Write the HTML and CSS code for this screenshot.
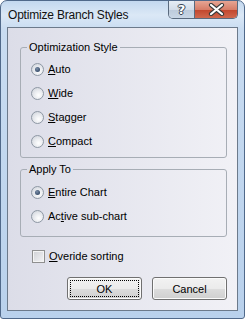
FILE: index.html
```html
<!DOCTYPE html>
<html>
<head>
	<title>Optimize Branch Styles</title>
	<link rel="stylesheet" href="styles.css">
</head>
<body>
	<div class="window">
		<div class="titlebar">
			<span class="title">Optimize Branch Styles</span>
			<div class="caption">
				<span class="cap-btn help">?</span>
				<span class="cap-btn close">
					<svg width="17" height="13" viewBox="0 0 17 13">
						<path d="M3 2 L14 11 M14 2 L3 11" stroke="#3b3b3b" stroke-width="4.2" stroke-linecap="round"/>
						<path d="M3 2 L14 11 M14 2 L3 11" stroke="#ffffff" stroke-width="2.2" stroke-linecap="round"/>
					</svg>
				</span>
			</div>
		</div>
		<div class="client">
			<fieldset class="group group-style">
				<legend>Optimization Style</legend>
				<label class="option"><span class="radio checked"></span><span><u>A</u>uto</span></label>
				<label class="option"><span class="radio"></span><span><u>W</u>ide</span></label>
				<label class="option"><span class="radio"></span><span><u>S</u>tagger</span></label>
				<label class="option"><span class="radio"></span><span><u>C</u>ompact</span></label>
			</fieldset>
			<fieldset class="group group-apply">
				<legend>Apply To</legend>
				<label class="option"><span class="radio checked"></span><span><u>E</u>ntire Chart</span></label>
				<label class="option"><span class="radio"></span><span>Ac<u>t</u>ive sub-chart</span></label>
			</fieldset>
			<label class="option sorting"><span class="checkbox"></span><span><u>O</u>veride sorting</span></label>
			<div class="buttons">
				<button class="btn default"><span class="focus">OK</span></button>
				<button class="btn">Cancel</button>
			</div>
		</div>
	</div>
</body>
</html>
```

FILE: styles.css
```css
		body {
			margin: 0;
			font-family: "Liberation Sans", Arial, sans-serif;
			font-size: 11px;
			color: #000;
			background: #fff;
		}
		.window {
			width: 245px;
			height: 319px;
			box-sizing: border-box;
			border: 1px solid #50698a;
			border-radius: 7px 7px 3px 3px;
			background: linear-gradient(to bottom, #c3d8ef 0px, #dbe8f6 14px, #c9dcf1 28px, #b9d1ec 100%);
			display: flex;
			flex-direction: column;
			overflow: hidden;
		}
		.titlebar {
			height: 26px;
			display: flex;
			justify-content: space-between;
			align-items: flex-start;
			padding-left: 7px;
		}
		.title {
			font-size: 12px;
			margin-top: 7px;
			letter-spacing: -0.2px;
			color: #111;
		}
		.caption {
			display: flex;
			margin-right: 6px;
			border: 1px solid #5a6a7e;
			border-top: none;
			border-radius: 0 0 5px 5px;
			overflow: hidden;
			height: 17px;
		}
		.cap-btn {
			display: flex;
			align-items: center;
			justify-content: center;
		}
		.help {
			width: 25px;
			border-right: 1px solid #5a6a7e;
			background: linear-gradient(to bottom, #e6edf5 0%, #d3dde9 50%, #bccadb 51%, #c9d7e6 100%);
			color: #fff;
			font-family: "DejaVu Sans", sans-serif;
			font-weight: bold;
			font-size: 13px;
			text-shadow: 0 0 1px #3b4656, 1px 0 0 #3b4656, -1px 0 0 #3b4656, 0 1px 0 #3b4656, 0 -1px 0 #3b4656;
		}
		.close {
			width: 42px;
			background: linear-gradient(to bottom, #e6a594 0%, #d77d68 50%, #c2452c 51%, #d0684e 100%);
		}
		.client {
			flex: 1;
			margin: 0 6px 7px 6px;
			border: 1px solid #6c7a8b;
			background: linear-gradient(to right, #dcdde8, #f1f1f6);
			display: flex;
			flex-direction: column;
			padding: 0 10px 0 12px;
		}
		.group {
			margin: 13px 0 0 0;
			padding: 3px 0 4px 10px;
			border: 1px solid #a7adb5;
			border-radius: 3px;
		}
		.group legend {
			padding: 0 2px;
			margin-left: -4px;
			line-height: 13px;
		}
		.group-apply {
			margin-top: 5px;
			padding-top: 4px;
			padding-bottom: 8px;
		}
		.option {
			display: flex;
			align-items: center;
			gap: 4px;
			height: 24px;
		}
		.radio {
			width: 11px;
			height: 11px;
			border-radius: 50%;
			border: 1px solid #8e98a4;
			background: radial-gradient(circle at 60% 65%, #ffffff 0%, #e9ebef 45%, #c9ced6 100%);
			display: flex;
			align-items: center;
			justify-content: center;
		}
		.radio.checked::after {
			content: "";
			width: 5px;
			height: 5px;
			border-radius: 50%;
			background: radial-gradient(circle at 40% 35%, #7b8ea8, #1f3554);
		}
		.sorting {
			margin-top: 7px;
			padding-left: 12px;
		}
		.checkbox {
			width: 11px;
			height: 11px;
			border: 1px solid #8f8f8f;
			background: linear-gradient(135deg, #cfd0d4, #f4f4f6);
			box-shadow: inset 0 0 0 1px #f4f4f4;
		}
		.buttons {
			display: flex;
			justify-content: flex-end;
			gap: 10px;
			margin-top: 9px;
		}
		.btn {
			width: 75px;
			height: 23px;
			box-sizing: border-box;
			border: 1px solid #707070;
			border-radius: 3px;
			background: linear-gradient(to bottom, #f2f2f2 0%, #ebebeb 50%, #dddddd 51%, #cfcfcf 100%);
			box-shadow: inset 0 0 0 1px #fbfbfb;
			font-family: "Liberation Sans", Arial, sans-serif;
			font-size: 11px;
			color: #000;
			padding: 0;
		}
		.btn.default {
			padding: 2px;
		}
		.focus {
			display: flex;
			align-items: center;
			justify-content: center;
			height: 100%;
			border: 1px dotted #000;
			box-sizing: border-box;
		}
```
